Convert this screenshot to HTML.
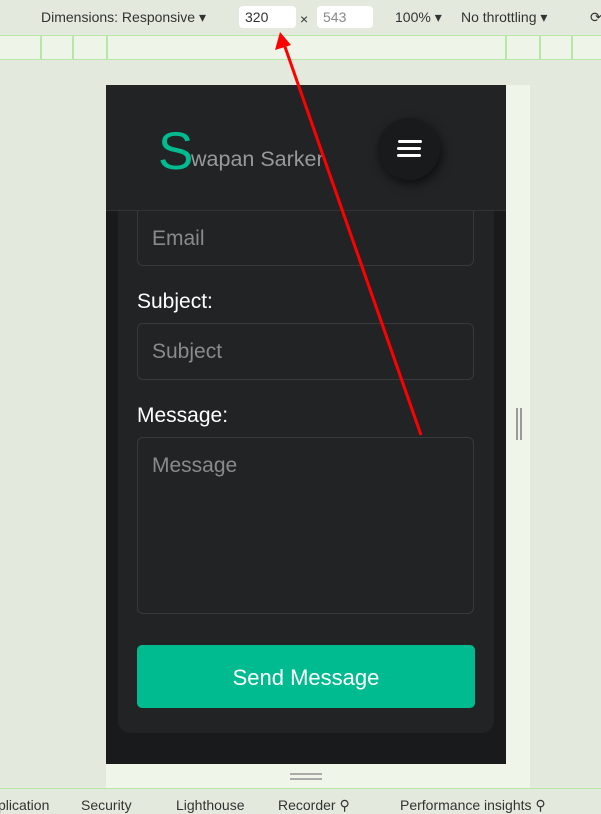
<!DOCTYPE html>
<html><head><meta charset="utf-8">
<style>
*{margin:0;padding:0;box-sizing:border-box}
body{width:601px;height:807px;overflow:hidden;background:#e3eadd;font-family:"Liberation Sans",sans-serif;position:relative}
.tb{position:absolute;left:0;top:0;width:601px;height:35px;background:#e3eadd;font-size:14px;color:#333}
.tb span{position:absolute;top:9px}
.box{position:absolute;top:6px;height:22px;background:#fff;border-radius:4px;font-size:14px;padding:3px 6px}
.ruler{position:absolute;left:0;top:35px;width:601px;height:25px;background:#eef4e8;border-top:1px solid #b6e6a8;border-bottom:1px solid #b6e6a8}
.ruler i{position:absolute;top:0;width:2px;height:24px;background:#b6e6a8}
.strip{position:absolute;left:506px;top:85px;width:24px;height:703px;background:#eff5e9}
.bottomstrip{position:absolute;left:106px;top:764px;width:424px;height:24px;background:#eff5e9}
.page{position:absolute;left:106px;top:85px;width:400px;height:679px;background:#181a1b;overflow:hidden}
.card{position:absolute;left:12px;top:100px;width:376px;height:548px;background:#222325;border-radius:12px}
.hdr{position:absolute;left:0;top:0;width:400px;height:126px;background:#222325;border-bottom:1px solid #333}
.logo{position:absolute;left:52px;top:40px;color:#00bb90;font-size:53px;line-height:53px}
.logo2{position:absolute;left:85px;top:64px;color:#999;font-size:21.5px;line-height:21px}
.menu{position:absolute;left:272px;top:33px;width:62px;height:62px;border-radius:50%;background:#181a1b;box-shadow:2px 4px 10px rgba(0,0,0,.6)}
.menu i{position:absolute;left:19px;width:24px;height:3px;background:#fff;border-radius:2px}
.inp{position:absolute;left:31px;width:337px;border:1px solid #38393b;border-radius:6px;background:#222325;color:#8a8a8a;font-size:21px;padding:16px 14px}
.lbl{position:absolute;left:31px;color:#fff;font-size:21px}
.btn{position:absolute;left:31px;top:560px;width:338px;height:63px;background:#00bb90;border-radius:5px;color:#fff;font-size:22px;text-align:center;line-height:65px}
.tabs{position:absolute;left:0;top:788px;width:601px;height:19px;border-top:1px solid #b6e6a8;font-size:14px;color:#333}
.tabs span{position:absolute;top:8px}
</style></head><body>
<div class="tb">
<span style="left:41px">Dimensions: Responsive ▾</span>
<div class="box" style="left:239px;width:57px">320</div>
<span style="left:300px;top:11px">×</span>
<div class="box" style="left:317px;width:56px;color:#888">543</div>
<span style="left:395px">100% ▾</span>
<span style="left:461px">No throttling ▾</span>
<span style="left:590px">⟳</span>
</div>
<div class="ruler"><i style="left:40px"></i><i style="left:72px"></i><i style="left:106px"></i><i style="left:505px"></i><i style="left:539px"></i><i style="left:571px"></i></div>
<div class="strip"></div>
<div class="bottomstrip"><div style="position:absolute;left:184px;top:9px;width:32px;height:2px;background:#aaa"></div><div style="position:absolute;left:184px;top:14px;width:32px;height:2px;background:#aaa"></div></div>
<div style="position:absolute;left:516px;top:408px;width:2px;height:32px;background:#999"></div>
<div style="position:absolute;left:520px;top:408px;width:2px;height:32px;background:#999"></div>
<div class="page">
<div class="card"></div>
<div class="inp" style="top:126px;height:55px;border-top:none;border-radius:0 0 6px 6px">Email</div>
<div class="lbl" style="top:205px">Subject:</div>
<div class="inp" style="top:238px;height:57px">Subject</div>
<div class="lbl" style="top:319px">Message:</div>
<div class="inp" style="top:352px;height:177px">Message</div>
<div class="btn">Send Message</div>
<div class="hdr">
<div class="logo">S</div><div class="logo2">wapan Sarker</div>
<div class="menu"><i style="top:22px;left:20px"></i><i style="top:29px"></i><i style="top:36px"></i></div>
</div>
</div>
<div class="tabs"><span style="left:-2px">plication</span><span style="left:81px">Security</span><span style="left:176px">Lighthouse</span><span style="left:278px">Recorder ⚲</span><span style="left:400px">Performance insights ⚲</span></div>
<svg style="position:absolute;left:0;top:0" width="601" height="807"><line x1="421" y1="435" x2="284" y2="44" stroke="#f00" stroke-width="3"/><polygon points="280,32 275,50 291,45" fill="#f00"/></svg>
</body></html>
